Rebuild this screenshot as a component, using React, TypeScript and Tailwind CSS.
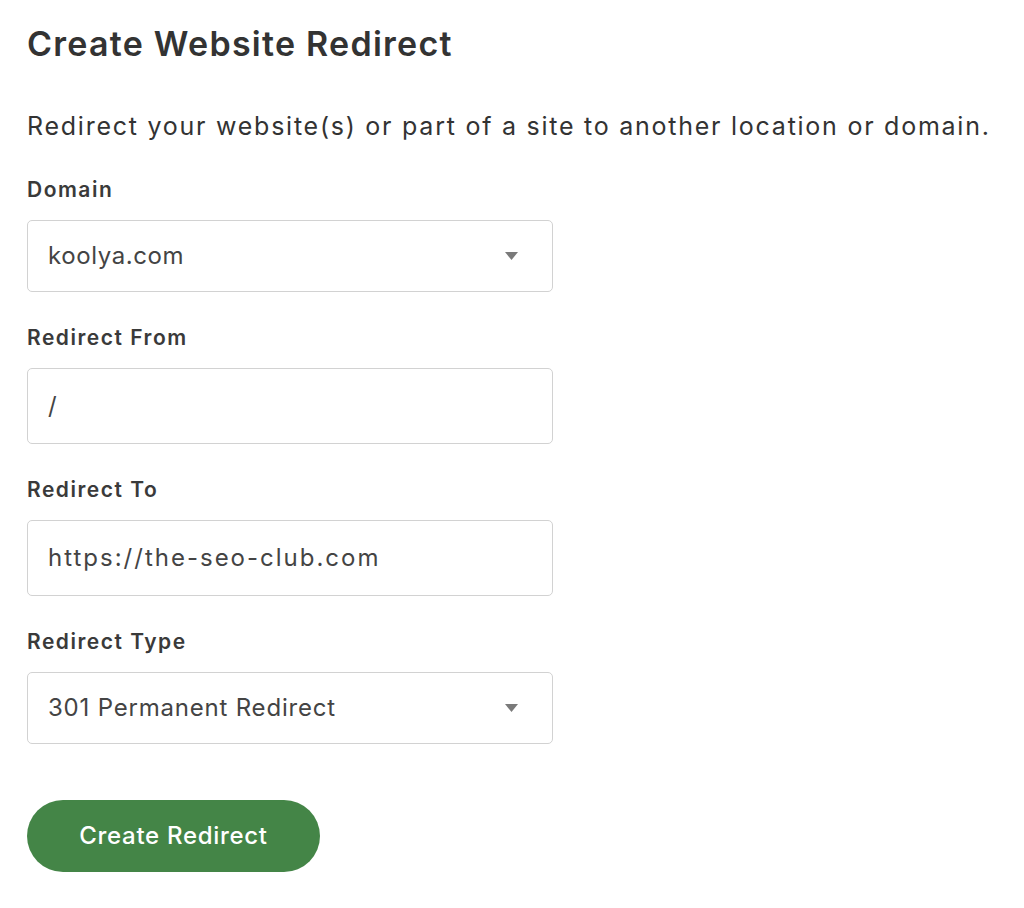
const font = { fontFamily: 'Inter, "Open Sans", sans-serif' };

function Caret() {
  return (
    <svg width="13" height="8" viewBox="0 0 13 8" className="absolute right-[34px] top-1/2 -translate-y-1/2">
      <path d="M0 0 H13 L6.5 8 Z" fill="#7a7a7a" />
    </svg>
  );
}

function Field({ label, children }: { label: string; children: React.ReactNode }) {
  return (
    <div className="flex flex-col gap-[18px]">
      <label className="text-[21px] leading-[24px] font-semibold tracking-[1.5px] text-[#3a3a3a]">{label}</label>
      {children}
    </div>
  );
}

export default function App() {
  return (
    <div className="min-h-screen bg-white px-[27px] pt-[24px] text-[#333]" style={font}>
      <h1 className="text-[34px] leading-[40px] font-semibold tracking-[1.25px] text-[#333]">Create Website Redirect</h1>

      <p className="mt-[46px] text-[25px] leading-[32px] tracking-[1.75px] text-[#333] whitespace-nowrap">
        Redirect your website(s) or part of a site to another location or domain.
      </p>

      <form className="mt-[36px] flex flex-col gap-[34px] w-[526px]">
        <Field label="Domain">
          <div className="relative h-[72px] rounded-[5px] border-[1.5px] border-[#d2d2d2] flex items-center pl-[20px] text-[24px] tracking-[0.6px] text-[#444]">
            koolya.com
            <Caret />
          </div>
        </Field>

        <Field label="Redirect From">
          <div className="h-[76px] rounded-[5px] border-[1.5px] border-[#d2d2d2] flex items-center pl-[20px] text-[24px] text-[#444]">
            /
          </div>
        </Field>

        <Field label="Redirect To">
          <div className="h-[76px] rounded-[5px] border-[1.5px] border-[#d2d2d2] flex items-center pl-[20px] text-[24px] tracking-[2px] text-[#444]">
            https://the-seo-club.com
          </div>
        </Field>

        <Field label="Redirect Type">
          <div className="relative h-[72px] rounded-[5px] border-[1.5px] border-[#d2d2d2] flex items-center pl-[20px] text-[24px] tracking-[0.8px] text-[#444]">
            301 Permanent Redirect
            <Caret />
          </div>
        </Field>

        <button
          type="button"
          className="mt-[22px] h-[72px] w-[293px] rounded-full bg-[#448547] text-white text-[24px] font-medium tracking-[0.7px]"
        >
          Create Redirect
        </button>
      </form>
    </div>
  );
}
